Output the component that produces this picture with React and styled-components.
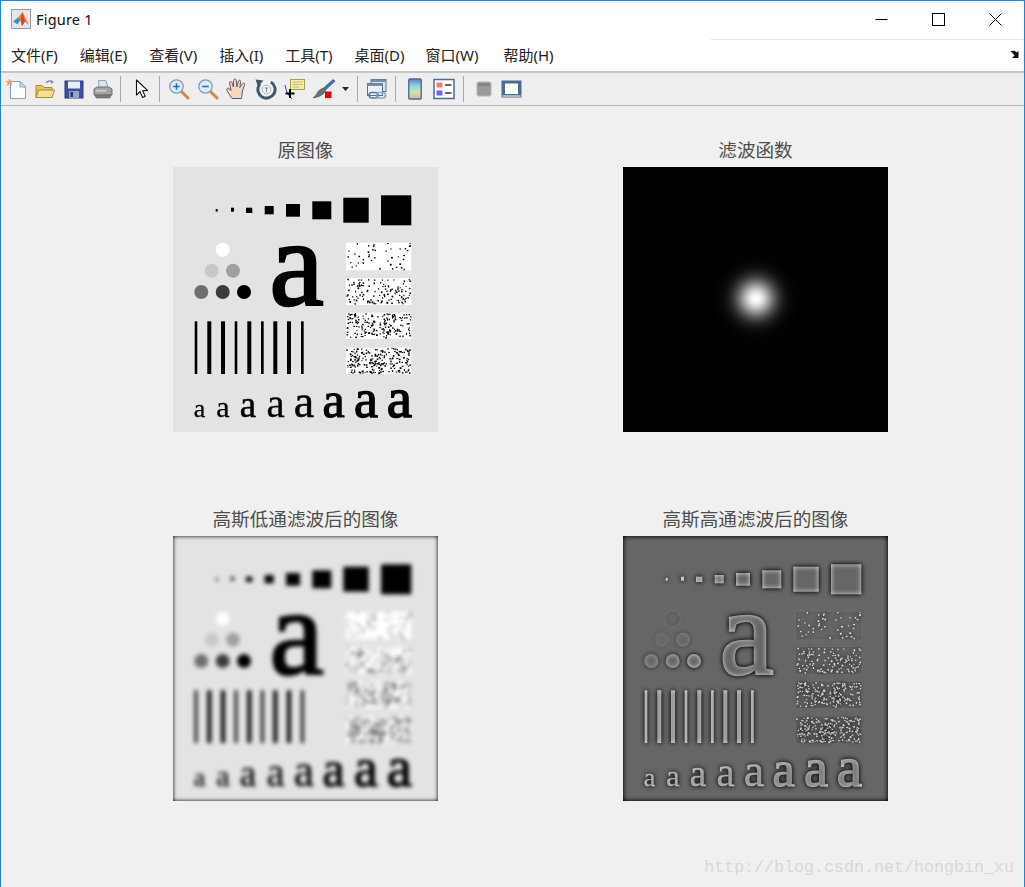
import React from 'react';
import styled, { createGlobalStyle } from 'styled-components';

const GlobalStyle = createGlobalStyle`
  html, body {
    margin: 0;
    padding: 0;
    background: #f0f0f0;
  }
  * {
    box-sizing: border-box;
  }
`;

const Win = styled.div`
  position: relative;
  width: 1025px;
  height: 887px;
  display: flex;
  flex-direction: column;
  border: 1px solid #1488e0;
  border-bottom: 0;
  background: #f0f0f0;
  font-family: "Noto Sans", "Noto Sans CJK SC", sans-serif;
  overflow: hidden;
`;

const TitleBar = styled.div`
  height: 38px;
  display: flex;
  align-items: center;
  background: #fff;
  padding: 0 0 2px 10px;
`;

const TitleText = styled.span`
  margin-left: 5px;
  font-size: 14.5px;
  color: #111;
  letter-spacing: 0.2px;
`;

const WinButtons = styled.div`
  margin-left: auto;
  display: flex;
`;

const WinButton = styled.div`
  width: 57px;
  height: 36px;
  display: flex;
  align-items: center;
  justify-content: center;
`;

const TitleRule = styled.div`
  height: 1px;
  background: #fff;
  &::after {
    content: '';
    display: block;
    height: 1px;
    margin-left: 710px;
    background: #e4e4e4;
  }
`;

const MenuBar = styled.div`
  height: 33px;
  display: flex;
  align-items: center;
  background: #fff;
  padding: 0 0 3px 10px;
  border-bottom: 2px solid #c6c6c6;
`;

const MenuItem = styled.span`
  margin-right: ${(p) => p.$gap}px;
  font-size: 15px;
  color: #222;
  white-space: nowrap;
`;

const CornerArrow = styled.div`
  margin-left: auto;
  margin-right: 4px;
  display: flex;
`;

const Toolbar = styled.div`
  height: 33px;
  display: flex;
  align-items: center;
  background: #eeeeee;
  border-bottom: 1px solid #b4b4b4;
`;

const ToolSlot = styled.div`
  width: ${(p) => p.$w || 29}px;
  height: 22px;
  flex: none;
  display: flex;
  align-items: center;
  justify-content: center;
`;

const ToolSep = styled.div`
  width: ${(p) => p.$w || 8}px;
  margin-right: ${(p) => p.$after || 0}px;
  height: 26px;
  flex: none;
  display: flex;
  justify-content: center;
  &::before {
    content: '';
    width: 1px;
    background: #a9a9a9;
  }
`;

const Figure = styled.div`
  flex: 1;
  display: grid;
  grid-template-columns: 265px 265px;
  grid-auto-rows: 295px;
  column-gap: 185px;
  row-gap: 74px;
  padding: 31px 0 0 172px;
`;

const Plot = styled.div`
  display: flex;
  flex-direction: column;
  align-items: center;
`;

const PlotTitle = styled.div`
  height: 30px;
  line-height: 24px;
  font-family: "Noto Sans CJK SC", sans-serif;
  font-size: 18.6px;
  color: #4d4d4d;
  white-space: nowrap;
`;

const PlotImage = styled.svg`
  display: block;
  width: 265px;
  height: 265px;
  flex: none;
`;

const Watermark = styled.div`
  position: absolute;
  right: 10px;
  bottom: 9px;
  font-family: "Liberation Mono", monospace;
  font-size: 16.67px;
  line-height: 20px;
  color: #d8d8d2;
`;

const menus = [
  ['文件(F)', 22],
  ['编辑(E)', 22],
  ['查看(V)', 22],
  ['插入(I)', 22],
  ['工具(T)', 22],
  ['桌面(D)', 21],
  ['窗口(W)', 25],
  ['帮助(H)', 0],
];

// cheap seeded random so the speckles stay put between renders
const makeRandom = (seed) => {
  let s = seed;
  return () => {
    s = (s * 16807) % 2147483647;
    return s / 2147483647;
  };
};

const noiseBlocks = [
  { y: 75.7, h: 27.6, count: 42, seed: 11 },
  { y: 111, h: 27, count: 115, seed: 23 },
  { y: 145.7, h: 26.3, count: 170, seed: 37 },
  { y: 180.7, h: 26.3, count: 215, seed: 51 },
].map((b) => {
  const rnd = makeRandom(b.seed * 1000);
  const dots = [];
  for (let i = 0; i < b.count; i++) {
    dots.push({
      x: 173 + rnd() * 64,
      y: b.y + rnd() * (b.h - 1.5),
      w: 1 + rnd() * 0.8,
      h: 1 + rnd() * 0.8,
    });
  }
  return { ...b, dots };
});

const squares = [
  [42.7, 42, 2, 2.7],
  [58, 40.7, 3, 4],
  [73, 40.7, 6.3, 5.3],
  [91.7, 39, 9, 8.3],
  [113, 37, 14, 12.7],
  [139.3, 34.3, 19, 18],
  [170.3, 30.7, 25.4, 25],
  [208, 28.3, 30.3, 30],
];

const dotsRound = [
  [49.7, 82.7, '#ffffff'],
  [38.7, 103.7, '#c8c8c8'],
  [60, 103.7, '#a0a0a0'],
  [28.3, 125, '#6e6e6e'],
  [49.7, 125, '#3c3c3c'],
  [71, 125, '#000000'],
];

const bars = [
  [21.7, 2.6],
  [34.3, 4],
  [48, 4],
  [61.7, 2.6],
  [74.3, 4],
  [88, 2.7],
  [100.3, 4],
  [114, 4],
  [128, 2.7],
];

// x, font size, extra stroke to fatten the letter
const smallLetters = [
  [26.5, 26, 0.3],
  [50, 30, 0.3],
  [75, 37, 0.5],
  [102.5, 41, 0.3],
  [131, 46, 0.5],
  [160.5, 50, 1.2],
  [193, 54, 1.4],
  [226.5, 57, 1.6],
];

const ChartContent = () => (
  <>
    <rect x="-40" y="-40" width="345" height="345" fill="#000" />
    <rect width="265" height="265" fill="#e3e3e3" />
    {squares.map(([x, y, w, h]) => (
      <rect key={x} x={x} y={y} width={w} height={h} fill="#000" />
    ))}
    {dotsRound.map(([cx, cy, c]) => (
      <circle key={cx + '-' + cy} cx={cx} cy={cy} r="7" fill={c} />
    ))}
    {bars.map(([x, w]) => (
      <rect key={x} x={x} y="154.3" width={w} height="52.7" fill="#000" />
    ))}
    {noiseBlocks.map((b) => (
      <g key={b.seed}>
        <rect x="173" y={b.y} width="65.3" height={b.h} fill="#fff" />
        {b.dots.map((d, i) => (
          <rect key={i} x={d.x} y={d.y} width={d.w} height={d.h} fill="#000" />
        ))}
      </g>
    ))}
    <text
      x="123.5"
      y="137.5"
      fontFamily="'Liberation Serif', serif"
      fontSize="122"
      textAnchor="middle"
      fill="#000"
      stroke="#000"
      strokeWidth="2.6"
    >
      a
    </text>
    {smallLetters.map(([x, size, fat]) => (
      <text
        key={x}
        x={x}
        y="250"
        fontFamily="'Liberation Serif', serif"
        fontSize={size}
        textAnchor="middle"
        fill="#000"
        stroke="#000"
        strokeWidth={fat}
      >
        a
      </text>
    ))}
  </>
);

const filterBox = { filterUnits: 'userSpaceOnUse', x: -30, y: -30, width: 325, height: 325, colorInterpolationFilters: 'sRGB' };

const TestChart = ({ mode }) => (
  <PlotImage viewBox="0 0 265 265">
    <defs>
      <filter id="plain" {...filterBox}>
        <feGaussianBlur stdDeviation="0.35" />
      </filter>
      <filter id="low" {...filterBox}>
        <feGaussianBlur stdDeviation="2.1" />
      </filter>
      <filter id="high" {...filterBox}>
        <feGaussianBlur in="SourceGraphic" stdDeviation="2.6" result="soft" />
        <feComponentTransfer in="SourceGraphic" result="inv">
          <feFuncR type="table" tableValues="1 0" />
          <feFuncG type="table" tableValues="1 0" />
          <feFuncB type="table" tableValues="1 0" />
        </feComponentTransfer>
        <feComposite in="soft" in2="inv" operator="arithmetic" k1="0" k2="0.5" k3="0.5" k4="0" />
        <feComponentTransfer>
          <feFuncR type="linear" slope="1.1" intercept="-0.15" />
          <feFuncG type="linear" slope="1.1" intercept="-0.15" />
          <feFuncB type="linear" slope="1.1" intercept="-0.15" />
        </feComponentTransfer>
      </filter>
    </defs>
    <g filter={`url(#${mode})`}>
      <ChartContent />
    </g>
  </PlotImage>
);

const spotStops = Array.from({ length: 16 }, (_, i) => {
  const r = i / 15;
  const v = Math.round(255 * Math.exp((-r * r * 48 * 48) / (2 * 13 * 13)));
  return { offset: r, color: `rgb(${v},${v},${v})` };
});

const FilterSpot = () => (
  <PlotImage viewBox="0 0 265 265">
    <defs>
      <radialGradient id="spot">
        {spotStops.map((s) => (
          <stop key={s.offset} offset={s.offset} stopColor={s.color} />
        ))}
      </radialGradient>
    </defs>
    <rect width="265" height="265" fill="#000" />
    <circle cx="133" cy="131.5" r="48" fill="url(#spot)" />
  </PlotImage>
);

const Logo = () => (
  <svg width="20" height="20" viewBox="0 0 20 20">
    <rect x="0.5" y="0.5" width="19" height="19" fill="#e2e6ee" stroke="#9a9a9a" />
    <path d="M2 12.5 L7 8.5 L9.5 11 L6.5 15.5 Z" fill="#3f8fc4" />
    <path d="M7 8.5 L11.5 3 L18 16 L14 12.5 L11 17 L9.5 11 Z" fill="#ee8030" />
    <path d="M11.5 3 L14 12.5 L11 17 L9.5 11 Z" fill="#d2481f" />
  </svg>
);

const NewIcon = () => (
  <svg width="22" height="22" viewBox="0 0 22 22">
    <path d="M5.5 3.5 H15 L20.5 9 V20.5 H5.5 Z" fill="#fff" stroke="#7ba6cc" />
    <path d="M15 3.5 V9 H20.5 Z" fill="#d5e4f2" stroke="#7ba6cc" />
    <path d="M4.5 1 L5.3 3.4 L7.8 3.2 L5.9 4.9 L6.8 7.2 L4.5 5.9 L2.2 7.2 L3.1 4.9 L1.2 3.2 L3.7 3.4 Z" fill="#f0a070" stroke="#e2733c" strokeWidth="0.4" />
  </svg>
);

const OpenIcon = () => (
  <svg width="22" height="22" viewBox="0 0 22 22">
    <path d="M12 5 C14 2.5 16 2.5 18 3.5" fill="none" stroke="#7f93a8" strokeWidth="1.5" />
    <path d="M17 2 L20 4 L17 6 Z" fill="#7f93a8" />
    <path d="M2 19.5 V7.5 H8 L10 9.5 H18 V19.5 Z" fill="#e8c45c" stroke="#a98a35" />
    <path d="M2 19.5 L4.5 12 H20.5 L18 19.5 Z" fill="#f7e08c" stroke="#a98a35" />
  </svg>
);

const SaveIcon = () => (
  <svg width="22" height="22" viewBox="0 0 22 22">
    <rect x="2" y="3" width="18" height="17" fill="#3b4fa6" stroke="#2a3880" />
    <rect x="5" y="3.5" width="12" height="7" fill="#e8ecf6" />
    <rect x="6" y="13" width="10" height="7" fill="#9aa2c4" />
    <rect x="7.5" y="14" width="2.5" height="5" fill="#28306a" />
  </svg>
);

const PrintIcon = () => (
  <svg width="22" height="22" viewBox="0 0 22 22">
    <path d="M6.5 2.5 H14 L16 10 H7 Z" fill="#d9e4ee" stroke="#8ea4b8" />
    <path d="M2 11 L5 9 H17 L20 11 V17 H2 Z" fill="#a4a4a4" stroke="#6e6e6e" />
    <path d="M3 17 H19 L18 20 H4 Z" fill="#7c7c7c" stroke="#5e5e5e" strokeWidth="0.6" />
    <rect x="4" y="12" width="10" height="1.5" fill="#d2d2d2" />
  </svg>
);

const CursorIcon = () => (
  <svg width="22" height="22" viewBox="0 0 22 22">
    <path d="M5.5 2 V17 L9 13.6 L11.6 19.5 L14.2 18.3 L11.6 12.7 L16.5 12.4 Z" fill="#fff" stroke="#111" strokeWidth="1.1" strokeLinejoin="round" />
  </svg>
);

const LensIcon = ({ plus }) => (
  <svg width="22" height="22" viewBox="0 0 22 22">
    <path d="M13 13 L20 20" stroke="#d28a3a" strokeWidth="3" strokeLinecap="round" />
    <circle cx="8.5" cy="8.5" r="6.7" fill="#dcebf6" stroke="#7c9dbb" strokeWidth="1.3" />
    <path d={plus ? 'M5.2 8.5 H11.8 M8.5 5.2 V11.8' : 'M5.2 8.5 H11.8'} stroke="#2f6fae" strokeWidth="1.6" />
  </svg>
);

const HandIcon = () => (
  <svg width="22" height="22" viewBox="0 0 22 22">
    <path
      d="M6 20.5 C4 17 1.5 14.5 0.8 12 C0.4 10 2.6 9.6 3.8 11 L5 12.5 L3.6 5 C3.4 3.2 5.6 3 6 4.6 L7.4 9 L7.6 2.6 C7.7 0.6 10.2 0.6 10.4 2.6 L10.8 9 L12.4 3.2 C12.8 1.6 14.8 2 14.6 3.6 L13.8 9.6 L16.4 5.6 C17.2 4.4 19 5 18.6 6.6 L16.4 13 C16 16 16 18.5 15.4 20.5 Z"
      fill="#f8d8bc"
      stroke="#5a5a78"
      strokeWidth="1"
      strokeLinejoin="round"
    />
  </svg>
);

const RotateIcon = () => (
  <svg width="22" height="22" viewBox="0 0 22 22">
    <circle cx="11.5" cy="11.5" r="8.6" fill="#f4f4f4" stroke="#3f566c" strokeWidth="3" strokeDasharray="42 12" transform="rotate(-60 11.5 11.5)" />
    <path d="M0.5 1.5 L8.5 2.5 L3 8.5 Z" fill="#3f566c" />
    <circle cx="11.5" cy="11.5" r="4.4" fill="none" stroke="#9db0c2" strokeWidth="1" />
    <path d="M9.8 10 H13.2 M11.5 10 V14" stroke="#6e8396" strokeWidth="1" />
  </svg>
);

const DataTipIcon = () => (
  <svg width="22" height="22" viewBox="0 0 22 22">
    <rect x="6.5" y="1.5" width="14" height="10" fill="#f6eea8" stroke="#a79c56" />
    <path d="M8.5 4 H18.5 M8.5 6.5 H18.5 M8.5 9 H15" stroke="#b9ad63" strokeWidth="0.8" />
    <path d="M1 7 C2 13 4 17 8 21" fill="none" stroke="#3a3ad0" strokeWidth="1" />
    <path d="M6 11 V20 M1.5 15.5 H10.5" stroke="#000" strokeWidth="2" />
  </svg>
);

const BrushIcon = () => (
  <svg width="24" height="22" viewBox="0 0 24 22">
    <path d="M21 1.5 L23 3 L13 12.5 L11 10.5 Z" fill="#3f6fb5" stroke="#2b4c80" strokeWidth="0.6" />
    <path d="M10.8 10.3 L13.4 12.9 C12.4 15.6 9 18.5 1 20 C4 17.6 5 15.5 6 13.5 C7.4 12 9.4 11 10.8 10.3 Z" fill="#707070" stroke="#444" strokeWidth="0.6" />
    <rect x="13" y="13.5" width="6.5" height="6.5" fill="#f00000" />
  </svg>
);

const DropArrow = () => (
  <svg width="7" height="4" viewBox="0 0 7 4">
    <path d="M0 0 H7 L3.5 4 Z" fill="#222" />
  </svg>
);

const LinkIcon = () => (
  <svg width="22" height="22" viewBox="0 0 22 22">
    <rect x="5" y="1.5" width="15" height="12" fill="#dde6f0" stroke="#52728f" />
    <rect x="5" y="1.5" width="15" height="2.5" fill="#6f8fae" />
    <rect x="1.5" y="5.5" width="15" height="12" fill="#eef3f8" stroke="#52728f" />
    <rect x="1.5" y="5.5" width="15" height="2.5" fill="#6f8fae" />
    <rect x="3" y="14.5" width="9" height="5.5" rx="2.7" fill="none" stroke="#4f7ea8" strokeWidth="1.7" />
    <rect x="10.5" y="14.5" width="9" height="5.5" rx="2.7" fill="none" stroke="#8aa8c4" strokeWidth="1.7" />
  </svg>
);

const ColorbarIcon = () => (
  <svg width="14" height="22" viewBox="0 0 14 22">
    <defs>
      <linearGradient id="barFill" x1="0" y1="0" x2="0" y2="1">
        <stop offset="0" stopColor="#5b7fd6" />
        <stop offset="0.35" stopColor="#8fd4e6" />
        <stop offset="0.65" stopColor="#c8e8a8" />
        <stop offset="1" stopColor="#f0a890" />
      </linearGradient>
    </defs>
    <rect x="0.8" y="1" width="12.4" height="20" rx="1" fill="url(#barFill)" stroke="#4e6d8c" strokeWidth="1.4" />
  </svg>
);

const LegendIcon = () => (
  <svg width="22" height="22" viewBox="0 0 22 22">
    <rect x="1" y="1.5" width="20" height="19" fill="#fff" stroke="#4e6d8c" strokeWidth="1.5" />
    <rect x="3.5" y="4.5" width="6" height="5" fill="#ee7a7a" />
    <rect x="3.5" y="12.5" width="6" height="5" fill="#6a6ae6" />
    <path d="M12 7 H18.5 M12 15 H18.5" stroke="#333" strokeWidth="1.6" />
  </svg>
);

const HideIcon = () => (
  <svg width="16" height="16" viewBox="0 0 16 16">
    <rect x="1" y="1" width="14" height="14" rx="2" fill="#9a9a9a" stroke="#b4b4b4" />
    <rect x="2" y="2" width="12" height="3" fill="#858585" />
  </svg>
);

const ShowIcon = () => (
  <svg width="21" height="18" viewBox="0 0 21 18">
    <rect x="0.5" y="0.5" width="20" height="17" fill="#4e6d8c" />
    <rect x="4" y="3.5" width="13" height="10.5" fill="#fff" />
    <rect x="1.5" y="15" width="18" height="2" fill="#a9b8c7" />
  </svg>
);

const Minimize = () => (
  <svg width="13" height="13" viewBox="0 0 13 13">
    <path d="M0.5 6.5 H12.5" stroke="#000" strokeWidth="1" />
  </svg>
);

const Maximize = () => (
  <svg width="13" height="13" viewBox="0 0 13 13">
    <rect x="0.5" y="0.5" width="12" height="12" fill="none" stroke="#000" />
  </svg>
);

const CloseGlyph = () => (
  <svg width="13" height="13" viewBox="0 0 13 13">
    <path d="M0.5 0.5 L12.5 12.5 M12.5 0.5 L0.5 12.5" stroke="#000" strokeWidth="1" />
  </svg>
);

const CornerGlyph = () => (
  <svg width="10" height="9" viewBox="0 0 10 9">
    <path d="M0.5 1.5 C3 0 5.5 0.5 6.5 2.5 L8.5 1 V8 H2 L4.5 5.5 C3.5 3.5 2 2.5 0.5 1.5 Z" fill="#111" />
  </svg>
);

const App = () => (
  <Win>
    <GlobalStyle />
    <TitleBar>
      <Logo />
      <TitleText>Figure 1</TitleText>
      <WinButtons>
        <WinButton><Minimize /></WinButton>
        <WinButton><Maximize /></WinButton>
        <WinButton><CloseGlyph /></WinButton>
      </WinButtons>
    </TitleBar>
    <TitleRule />
    <MenuBar>
      {menus.map(([label, gap]) => (
        <MenuItem key={label} $gap={gap}>{label}</MenuItem>
      ))}
      <CornerArrow><CornerGlyph /></CornerArrow>
    </MenuBar>
    <Toolbar>
      <ToolSlot><NewIcon /></ToolSlot>
      <ToolSlot><OpenIcon /></ToolSlot>
      <ToolSlot><SaveIcon /></ToolSlot>
      <ToolSlot><PrintIcon /></ToolSlot>
      <ToolSep $w={6} $after={4} />
      <ToolSlot><CursorIcon /></ToolSlot>
      <ToolSep $w={7} $after={1} />
      <ToolSlot><LensIcon plus /></ToolSlot>
      <ToolSlot><LensIcon /></ToolSlot>
      <ToolSlot><HandIcon /></ToolSlot>
      <ToolSlot><RotateIcon /></ToolSlot>
      <ToolSlot><DataTipIcon /></ToolSlot>
      <ToolSlot><BrushIcon /></ToolSlot>
      <ToolSlot $w={15}><DropArrow /></ToolSlot>
      <ToolSep $w={8} $after={1} />
      <ToolSlot><LinkIcon /></ToolSlot>
      <ToolSep $w={8} $after={1} />
      <ToolSlot><ColorbarIcon /></ToolSlot>
      <ToolSlot><LegendIcon /></ToolSlot>
      <ToolSep $w={10} $after={1} />
      <ToolSlot><HideIcon /></ToolSlot>
      <ToolSlot $w={27}><ShowIcon /></ToolSlot>
    </Toolbar>
    <Figure>
      <Plot>
        <PlotTitle>原图像</PlotTitle>
        <TestChart mode="plain" />
      </Plot>
      <Plot>
        <PlotTitle>滤波函数</PlotTitle>
        <FilterSpot />
      </Plot>
      <Plot>
        <PlotTitle>高斯低通滤波后的图像</PlotTitle>
        <TestChart mode="low" />
      </Plot>
      <Plot>
        <PlotTitle>高斯高通滤波后的图像</PlotTitle>
        <TestChart mode="high" />
      </Plot>
    </Figure>
    <Watermark>http://blog.csdn.net/hongbin_xu</Watermark>
  </Win>
);

export default App;
